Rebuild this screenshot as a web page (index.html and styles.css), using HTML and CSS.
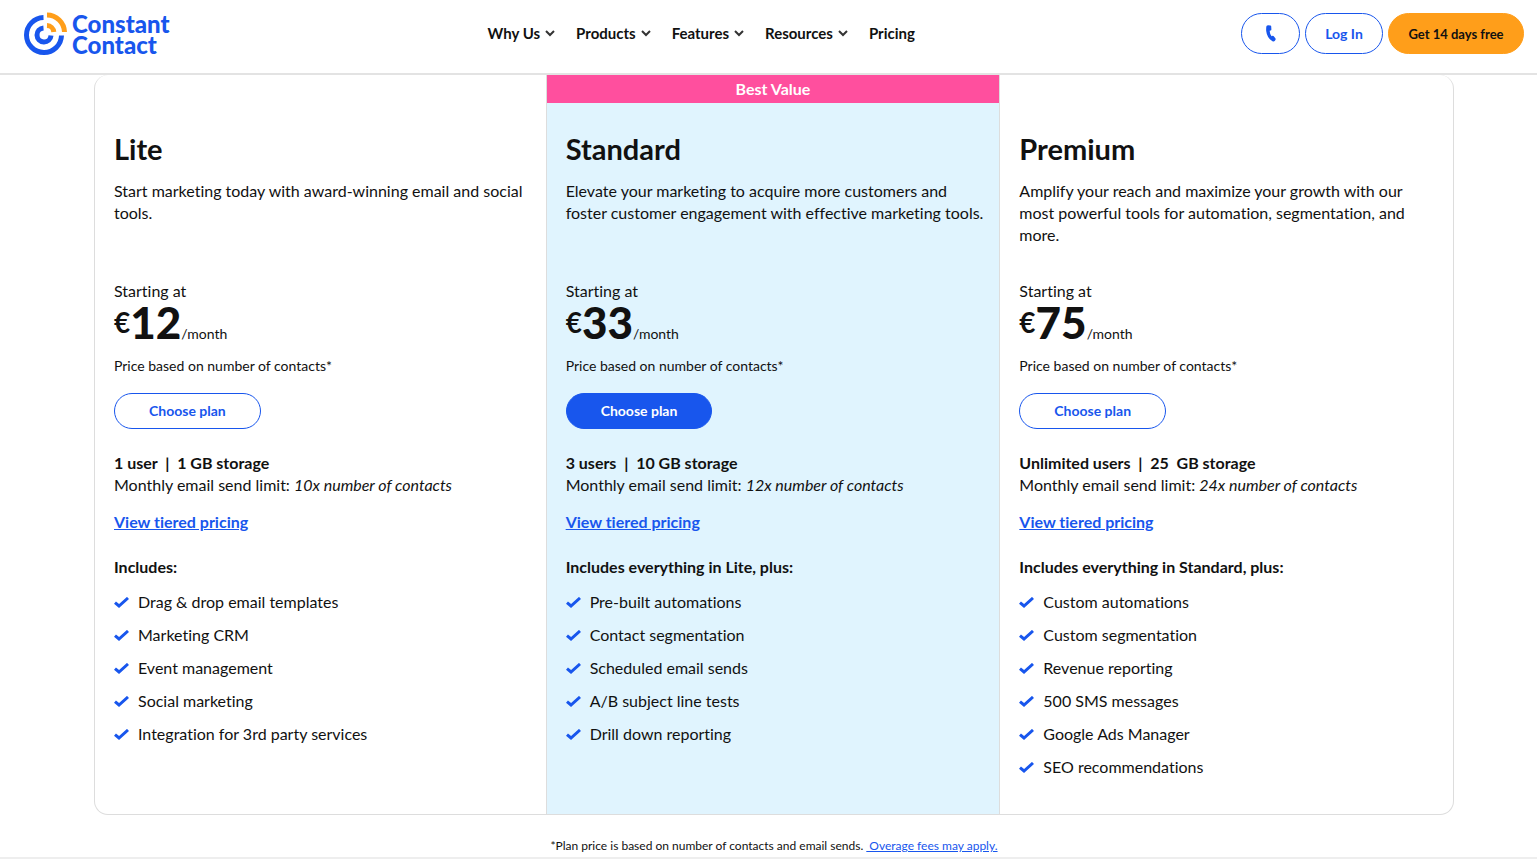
FILE: index.html
```html
<!DOCTYPE html>
<html lang="en">
<head>
    <meta charset="UTF-8">
    <meta name="viewport" content="width=device-width, initial-scale=1.0">
    <title>Pricing | Constant Contact</title>
    <link rel="stylesheet" href="styles.css">
</head>
<body>

<svg class="sprite" aria-hidden="true">
    <symbol id="chevron" viewBox="0 0 10 7">
        <path d="M1 1l4 4 4-4" fill="none" stroke="currentColor" stroke-width="2"/>
    </symbol>
    <symbol id="check" viewBox="0 0 15 11">
        <path d="M1 5.6l4 3.4L14 1" fill="none" stroke="currentColor" stroke-width="3"/>
    </symbol>
</svg>

<header class="site-header">
    <a class="logo" href="#">
        <svg width="43" height="44" viewBox="0 0 43 44" fill="none" stroke-width="5" aria-hidden="true">
            <path d="M19.5 5.5A17.5 17.5 0 1 0 37.5 23.5M19.5 16A7 7 0 1 0 27 23.5" stroke="#1856ed"/>
            <path d="M23 3A17.5 17.5 0 0 1 40.5 20M23 13.5A7 7 0 0 1 29.8 20" stroke="#ff9e1a"/>
        </svg>
        <span class="logo-text">Constant<br>Contact</span>
    </a>

    <nav class="main-nav">
        <button type="button">Why Us <svg class="chevron"><use href="#chevron"/></svg></button>
        <button type="button">Products <svg class="chevron"><use href="#chevron"/></svg></button>
        <button type="button">Features <svg class="chevron"><use href="#chevron"/></svg></button>
        <button type="button">Resources <svg class="chevron"><use href="#chevron"/></svg></button>
        <a href="#">Pricing</a>
    </nav>

    <div class="actions">
        <button type="button" class="pill phone" aria-label="Call us">
            <svg width="10" height="17" viewBox="0 0 10 17" aria-hidden="true">
                <path d="M.5 1Q1 .3 2.2.3L4.4.5Q5.1.6 5.2 1.3L5.4 4.4Q5.4 5.2 4.6 5.4L3.7 5.8Q3.6 8.6 5.6 11.2L6.6 10.8Q7.3 10.6 7.8 11.2L9.5 13.4Q9.9 14 9.5 14.7L8.9 15.7Q8 16.8 6.5 16.2Q1 13 .2 6Q0 2.8.5 1Z" fill="currentColor"/>
            </svg>
        </button>
        <button type="button" class="pill login">Log In</button>
        <button type="button" class="pill trial">Get 14 days free</button>
    </div>
</header>

<main class="pricing">
    <div class="plans">
        <section class="plan">
            <h2>Lite</h2>
            <p class="description">Start marketing today with award-winning email and social tools.</p>
            <p class="starting">Starting at</p>
            <p class="price"><span class="currency">€</span>12<span class="period">/month</span></p>
            <p class="note">Price based on number of contacts*</p>
            <button type="button" class="choose">Choose plan</button>
            <p class="limits"><strong>1 user &nbsp;|&nbsp; 1 GB storage</strong><br>Monthly email send limit: <em>10x number of contacts</em></p>
            <a class="tiers" href="#">View tiered pricing</a>
            <h3>Includes:</h3>
            <ul>
                <li><svg class="check"><use href="#check"/></svg>Drag &amp; drop email templates</li>
                <li><svg class="check"><use href="#check"/></svg>Marketing CRM</li>
                <li><svg class="check"><use href="#check"/></svg>Event management</li>
                <li><svg class="check"><use href="#check"/></svg>Social marketing</li>
                <li><svg class="check"><use href="#check"/></svg>Integration for 3rd party services</li>
            </ul>
        </section>

        <section class="plan featured">
            <div class="badge">Best Value</div>
            <h2>Standard</h2>
            <p class="description">Elevate your marketing to acquire more customers and foster customer engagement with effective marketing tools.</p>
            <p class="starting">Starting at</p>
            <p class="price"><span class="currency">€</span>33<span class="period">/month</span></p>
            <p class="note">Price based on number of contacts*</p>
            <button type="button" class="choose">Choose plan</button>
            <p class="limits"><strong>3 users &nbsp;|&nbsp; 10 GB storage</strong><br>Monthly email send limit: <em>12x number of contacts</em></p>
            <a class="tiers" href="#">View tiered pricing</a>
            <h3>Includes everything in Lite, plus:</h3>
            <ul>
                <li><svg class="check"><use href="#check"/></svg>Pre-built automations</li>
                <li><svg class="check"><use href="#check"/></svg>Contact segmentation</li>
                <li><svg class="check"><use href="#check"/></svg>Scheduled email sends</li>
                <li><svg class="check"><use href="#check"/></svg>A/B subject line tests</li>
                <li><svg class="check"><use href="#check"/></svg>Drill down reporting</li>
            </ul>
        </section>

        <section class="plan">
            <h2>Premium</h2>
            <p class="description">Amplify your reach and maximize your growth with our most powerful tools for automation, segmentation, and more.</p>
            <p class="starting">Starting at</p>
            <p class="price"><span class="currency">€</span>75<span class="period">/month</span></p>
            <p class="note">Price based on number of contacts*</p>
            <button type="button" class="choose">Choose plan</button>
            <p class="limits"><strong>Unlimited users &nbsp;|&nbsp; 25 &nbsp;GB storage</strong><br>Monthly email send limit: <em>24x number of contacts</em></p>
            <a class="tiers" href="#">View tiered pricing</a>
            <h3>Includes everything in Standard, plus:</h3>
            <ul>
                <li><svg class="check"><use href="#check"/></svg>Custom automations</li>
                <li><svg class="check"><use href="#check"/></svg>Custom segmentation</li>
                <li><svg class="check"><use href="#check"/></svg>Revenue reporting</li>
                <li><svg class="check"><use href="#check"/></svg>500 SMS messages</li>
                <li><svg class="check"><use href="#check"/></svg>Google Ads Manager</li>
                <li><svg class="check"><use href="#check"/></svg>SEO recommendations</li>
            </ul>
        </section>
    </div>

    <p class="footnote">*Plan price is based on number of contacts and email sends. <a href="#">&nbsp;Overage fees may apply.</a></p>
</main>

</body>
</html>
```
FILE: styles.css
```css
* {
    box-sizing: border-box;
}

body {
    margin: 0;
    background-color: #fff;
    color: #111;
    font-family: Lato, sans-serif;
    font-size: 16px;
    font-variant-ligatures: none;
    line-height: 22px;
}

h2, h3, p, ul {
    margin: 0;
    padding: 0;
}

button {
    font-family: inherit;
    cursor: pointer;
}

a {
    color: #1856ed;
}

.sprite {
    display: none;
}

/* Header */
.site-header {
    display: flex;
    justify-content: space-between;
    align-items: flex-start;
    padding: 12px 13px 17px 24px;
    border-bottom: 2px solid #e3e3e3;
}

.logo {
    display: flex;
    gap: 5px;
    color: #1856ed;
    text-decoration: none;
}

.logo-text {
    padding-top: 1px;
    font-size: 24px;
    font-weight: 900;
    line-height: 21px;
}

.main-nav {
    display: flex;
    gap: 21px;
    margin-right: 8px;
    padding-top: 10px;
}

.main-nav button, .main-nav a {
    display: flex;
    align-items: center;
    gap: 5px;
    padding: 0;
    border: none;
    background: none;
    color: #111;
    font-size: 15px;
    font-weight: 700;
    line-height: 22px;
    text-decoration: none;
}

.chevron {
    width: 10px;
    height: 7px;
    color: #333;
}

.actions {
    display: flex;
    gap: 5px;
    padding-top: 1px;
}

.pill {
    display: flex;
    justify-content: center;
    align-items: center;
    height: 41px;
    padding: 0;
    border: 1px solid #1856ed;
    border-radius: 21px;
    background-color: #fff;
    color: #1856ed;
    font-size: 14px;
    font-weight: 700;
}

.phone {
    width: 59px;
}

.login {
    width: 78px;
}

.trial {
    width: 136px;
    border-color: #ff9e1a;
    background-color: #ff9e1a;
    color: #111;
    font-size: 13px;
}

/* Plans */
.pricing {
    padding: 0 83px 0 94px;
    border-bottom: 2px solid #eee;
}

.plans {
    display: grid;
    grid-template-columns: repeat(3, 1fr);
    border: 1px solid #ddd;
    border-top: none;
    border-radius: 14px;
}

.plan {
    position: relative;
    padding: 57px 19px 36px;
}

.featured {
    margin-left: -2px;
    padding-right: 12px;
    border-left: 1px solid #ddd;
    border-right: 1px solid #ddd;
    background-color: #e0f4fe;
}

.badge {
    position: absolute;
    top: 0;
    left: 0;
    right: 0;
    background-color: #ff4f9e;
    color: #fff;
    font-weight: 700;
    line-height: 28px;
    text-align: center;
}

h2 {
    font-size: 29px;
    line-height: 34px;
}

.description {
    min-height: 66px;
    margin-top: 14px;
}

.starting {
    margin-top: 34px;
}

.price {
    display: flex;
    align-items: center;
    margin-top: 1px;
    font-size: 44px;
    font-weight: 900;
    line-height: 38px;
}

.currency {
    font-size: 28px;
    font-weight: 700;
}

.period {
    align-self: flex-end;
    font-size: 14px;
    font-weight: 400;
    line-height: 14px;
}

.note {
    margin-top: 16px;
    font-size: 14px;
    line-height: 18px;
}

.choose {
    height: 36px;
    margin-top: 18px;
    padding: 0 34px 2px;
    border: 1px solid #1856ed;
    border-radius: 18px;
    background-color: #fff;
    color: #1856ed;
    font-size: 14px;
    font-weight: 700;
}

.featured .choose {
    background-color: #1856ed;
    color: #fff;
}

.limits {
    margin-top: 23px;
}

.tiers {
    display: inline-block;
    margin-top: 15px;
    font-weight: 700;
}

h3 {
    margin-top: 23px;
    font-size: 16px;
    line-height: 22px;
}

ul {
    display: grid;
    gap: 11px;
    margin-top: 13px;
    list-style: none;
}

li {
    display: flex;
    align-items: center;
    gap: 9px;
}

.check {
    width: 15px;
    height: 11px;
    color: #1856ed;
}

.footnote {
    padding-top: 20px;
    font-size: 12px;
    text-align: center;
}
```
